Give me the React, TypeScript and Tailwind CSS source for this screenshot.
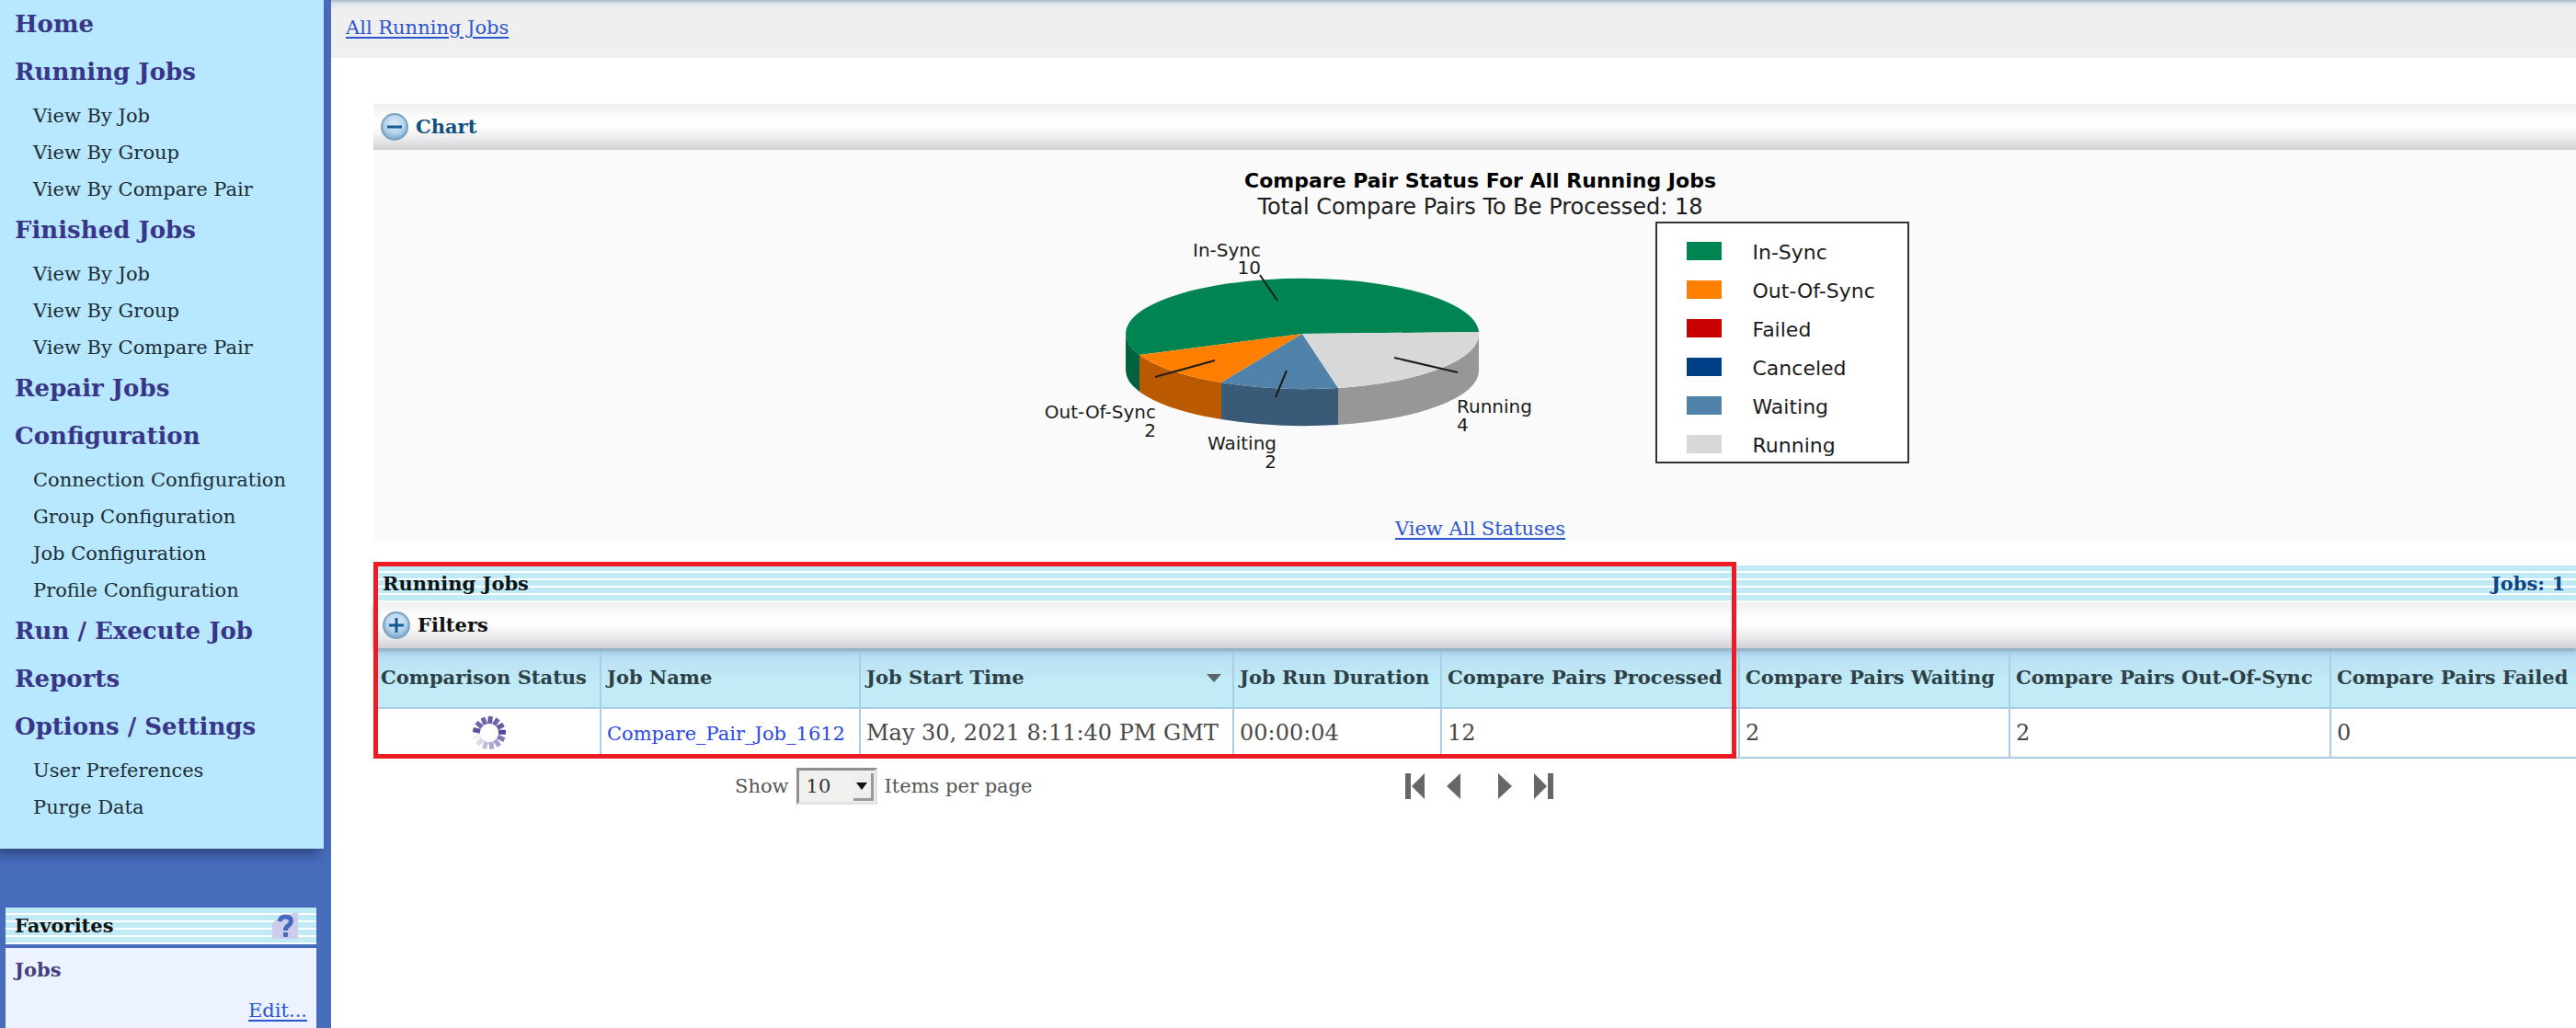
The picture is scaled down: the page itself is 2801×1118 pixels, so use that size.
import { useId, useState } from "react";

const STRIPES =
  "bg-[repeating-linear-gradient(to_bottom,#c0ebf6_0px,#c0ebf6_6px,#fbffff_6px,#fbffff_8px)]";
const SILVER =
  "bg-[linear-gradient(to_bottom,#efefef_0%,#ffffff_35%,#fdfdfd_50%,#e6e7e9_80%,#d0d0d2_100%)]";
const LINK = "text-[#2b55cf] underline underline-offset-3 decoration-2";

const MENU: { title: string; items: string[] }[] = [
  { title: "Home", items: [] },
  { title: "Running Jobs", items: ["View By Job", "View By Group", "View By Compare Pair"] },
  { title: "Finished Jobs", items: ["View By Job", "View By Group", "View By Compare Pair"] },
  { title: "Repair Jobs", items: [] },
  {
    title: "Configuration",
    items: ["Connection Configuration", "Group Configuration", "Job Configuration", "Profile Configuration"],
  },
  { title: "Run / Execute Job", items: [] },
  { title: "Reports", items: [] },
  { title: "Options / Settings", items: ["User Preferences", "Purge Data"] },
];

const LEGEND = [
  { label: "In-Sync", color: "bg-[#008552]" },
  { label: "Out-Of-Sync", color: "bg-[#ff8000]" },
  { label: "Failed", color: "bg-[#c80000]" },
  { label: "Canceled", color: "bg-[#003e85]" },
  { label: "Waiting", color: "bg-[#5182aa]" },
  { label: "Running", color: "bg-[#d8d8d8]" },
];

function Sidebar() {
  return (
    <aside className="flex w-[360px] shrink-0 flex-col bg-[#486cbc]">
      <nav className="mr-2 bg-[#b8e8ff] pb-[27px] shadow-[-6px_6px_12px_#2c4479]">
        <ul>
          {MENU.map((group) => (
            <li key={group.title}>
              <a href="#" className="block pl-4 text-[26px] leading-[52px] font-bold text-[#393689]">
                {group.title}
              </a>
              {group.items.length > 0 && (
                <ul>
                  {group.items.map((item) => (
                    <li key={item}>
                      <a href="#" className="block pt-1 pl-9 leading-9 text-[#1c2d35]">
                        {item}
                      </a>
                    </li>
                  ))}
                </ul>
              )}
            </li>
          ))}
        </ul>
      </nav>
      <section className="mt-16 mr-4 ml-1.5 flex flex-1 flex-col gap-1">
        <header className={`flex h-10 items-center justify-between pr-5 pl-2.5 ${STRIPES}`}>
          <h2 className="font-bold text-[#0d1416]">Favorites</h2>
          <button type="button" aria-label="Help" className="block">
            <svg width="28" height="30" viewBox="0 0 28 30" aria-hidden="true">
              <path d="M0 29V12Q10 3 28 0V29Z" fill="#cccdec" />
              <path
                d="M8 10Q9 5 14 5Q20.500 5 20.500 9.500Q20.500 12 17.500 14.500Q14.500 16.500 14.500 20"
                fill="none"
                stroke="#4368bd"
                strokeWidth="5"
              />
              <rect x="12" y="22" width="5" height="5" rx="1" fill="#4368bd" />
            </svg>
          </button>
        </header>
        <div className="flex flex-1 flex-col bg-[#ecf2ff] px-2.5 pt-2">
          <h3 className="leading-8 font-bold text-[#443f80]">Jobs</h3>
          <a href="#" className={`mt-3 self-end leading-8 ${LINK}`}>
            Edit...
          </a>
        </div>
      </section>
    </aside>
  );
}

function ToggleIcon({ plus }: { plus?: boolean }) {
  const id = useId();
  return (
    <svg width="30" height="30" viewBox="0 0 30 30" className="shrink-0" aria-hidden="true">
      <defs>
        <radialGradient id={id} cx="50%" cy="38%" r="62%">
          <stop offset="0%" stopColor="#dcecfa" />
          <stop offset="60%" stopColor="#b5d4ec" />
          <stop offset="100%" stopColor="#74a6cc" />
        </radialGradient>
      </defs>
      <circle cx="15" cy="15" r="14" fill={`url(#${id})`} stroke="#7aa3c3" strokeWidth="2" />
      <path d={plus ? "M7 15H23M15 7V23" : "M7 15H23"} stroke="#155a90" strokeWidth="3" />
    </svg>
  );
}

function PieChart() {
  return (
    <svg
      width="544"
      height="280"
      viewBox="-284 -122 544 280"
      role="img"
      aria-label="Compare pair status"
      className="shrink-0"
    >
      <path d="M-192 0A192 60 0 0 0 -177 23V63A192 60 0 0 1 -192 40Z" fill="#006340" />
      <path d="M-177 23A192 60 0 0 0 -88 53V93A192 60 0 0 1 -177 63Z" fill="#bb5900" />
      <path d="M-88 53A192 60 0 0 0 39 59V99A192 60 0 0 1 -88 93Z" fill="#395b77" />
      <path d="M39 59A192 60 0 0 0 192 -2V40A192 60 0 0 1 39 99Z" fill="#979797" />
      <path d="M0 0L192 -2A192 60 0 1 0 -177 23Z" fill="#008552" />
      <path d="M0 0L-177 23A192 60 0 0 0 -88 53Z" fill="#ff8000" />
      <path d="M0 0L-88 53A192 60 0 0 0 39 59Z" fill="#5182aa" />
      <path d="M0 0L39 59A192 60 0 0 0 192 -2Z" fill="#d8d8d8" />
      <path d="M-46 -64L-27 -36M-160 47L-95 29M-29 69L-17 40M100 26L169 42" stroke="#1c1c1c" strokeWidth="2" />
      <g fontFamily="DejaVu Sans, sans-serif" fontSize="20" fill="#1c1c1c">
        <g textAnchor="end">
          <text x="-45" y="-84">In-Sync</text>
          <text x="-45" y="-65">10</text>
          <text x="-159" y="92">Out-Of-Sync</text>
          <text x="-159" y="112">2</text>
          <text x="-28" y="126">Waiting</text>
          <text x="-28" y="146">2</text>
        </g>
        <text x="168" y="86">Running</text>
        <text x="168" y="106">4</text>
      </g>
    </svg>
  );
}

function ChartPanel() {
  return (
    <section>
      <header className={`flex h-[50px] items-center ${SILVER}`}>
        <button type="button" className="flex items-center gap-2 pl-2 font-bold text-[#10507f]">
          <ToggleIcon />
          Chart
        </button>
      </header>
      <div className="flex flex-col items-center bg-[#fafafa] pt-5 pl-3 text-black">
        <h2 className="font-['DejaVu_Sans',sans-serif] text-[22px] leading-7 font-bold">
          Compare Pair Status For All Running Jobs
        </h2>
        <p className="font-['DejaVu_Sans',sans-serif] text-2xl leading-7 text-[#1c1c1c]">
          Total Compare Pairs To Be Processed: 18
        </p>
        <div className="mt-0.5 mr-3 flex items-start gap-[124px]">
          <PieChart />
          <ul className="flex w-[276px] flex-col gap-[22px] border-2 border-[#333] bg-white pt-5 pb-[9px] pl-8 font-['DejaVu_Sans',sans-serif] text-[22px] leading-6 text-[#1c1c1c]">
            {LEGEND.map((entry) => (
              <li key={entry.label} className="flex h-5 items-start gap-[34px]">
                <span className={`h-5 w-[38px] ${entry.color}`} />
                {entry.label}
              </li>
            ))}
          </ul>
        </div>
        <a href="#" className={`mt-10 leading-7 ${LINK}`}>
          View All Statuses
        </a>
      </div>
    </section>
  );
}

const SPOKES = [0.85, 0.8, 0.85, 0.95, 0.7, 0.5, 0.45, 0.35, 0.2, 0.08, 0.9, 0.8, 0.8];

function Spinner() {
  return (
    <svg width="38" height="38" viewBox="-19 -19 38 38" className="mx-auto" role="img" aria-label="Running">
      {SPOKES.map((opacity, i) => (
        <rect
          key={i}
          x="-3"
          y="-18"
          width="5"
          height="8"
          fill="#4a3f96"
          opacity={opacity}
          transform={`rotate(${i * (360 / 13) + 6})`}
        />
      ))}
    </svg>
  );
}

const CELL = "border-r-2 border-b-2 border-[#a9cde9] pl-1.5 text-left whitespace-nowrap";

function JobsTable() {
  return (
    <table className="w-full table-fixed border-separate border-spacing-0">
      <colgroup>
        <col className="w-[248px]" />
        <col className="w-[282px]" />
        <col className="w-[406px]" />
        <col className="w-[226px]" />
        <col className="w-[324px]" />
        <col className="w-[294px]" />
        <col className="w-[349px]" />
        <col />
      </colgroup>
      <thead>
        <tr className="h-[66px] bg-[linear-gradient(to_bottom,#a9d3ef_0%,#bce2f3_22%,#c1ecf7_60%)] text-[#2e3f46]">
          <th className={`${CELL} pl-2`}>Comparison Status</th>
          <th className={CELL}>Job Name</th>
          <th className={CELL} aria-sort="descending">
            <button type="button" className="flex w-full items-center justify-between pr-3 font-bold">
              Job Start Time
              <svg width="16" height="9" viewBox="0 0 16 9" aria-hidden="true">
                <path d="M0 0H16L8 9Z" fill="#5d6468" />
              </svg>
            </button>
          </th>
          <th className={CELL}>Job Run Duration</th>
          <th className={CELL}>Compare Pairs Processed</th>
          <th className={CELL}>Compare Pairs Waiting</th>
          <th className={CELL}>Compare Pairs Out-Of-Sync</th>
          <th className="border-b-2 border-[#a9cde9] pl-1.5 text-left whitespace-nowrap">Compare Pairs Failed</th>
        </tr>
      </thead>
      <tbody>
        <tr className="h-[54px] text-2xl text-[#484848]">
          <td className={CELL}>
            <Spinner />
          </td>
          <td className={CELL}>
            <a href="#" className="text-[21px] text-[#2b4be0]">
              Compare_Pair_Job_1612
            </a>
          </td>
          <td className={CELL}>May 30, 2021 8:11:40 PM GMT</td>
          <td className={CELL}>00:00:04</td>
          <td className={CELL}>12</td>
          <td className={CELL}>2</td>
          <td className={CELL}>2</td>
          <td className="border-b-2 border-[#a9cde9] pl-1.5 text-left whitespace-nowrap">0</td>
        </tr>
      </tbody>
    </table>
  );
}

const PAGER = [
  { label: "First page", width: 21, d: "M0 0H6V28H0ZM21 0V28L7 14Z", gap: "" },
  { label: "Previous page", width: 15, d: "M15 0V28L0 14Z", gap: "ml-6" },
  { label: "Next page", width: 15, d: "M0 0V28L15 14Z", gap: "ml-[41px]" },
  { label: "Last page", width: 21, d: "M0 0V28L14 14ZM15 0H21V28H15Z", gap: "ml-6" },
];

function Pagination() {
  const [size, setSize] = useState("10");
  return (
    <footer className="flex items-center pt-2.5 pl-[393px] text-[#555]">
      <label htmlFor="page-size">Show</label>
      <span className="relative mx-2 flex">
        <select
          id="page-size"
          value={size}
          onChange={(event) => setSize(event.target.value)}
          className="h-10 w-[88px] appearance-none border-3 border-t-[#8f8f8f] border-r-[#e4e4e4] border-b-[#e4e4e4] border-l-[#8f8f8f] bg-[#f0f0ef] pl-2 text-[#333]"
        >
          <option>10</option>
          <option>25</option>
          <option>50</option>
        </select>
        <span className="pointer-events-none absolute top-1.5 right-1 flex h-[30px] w-[22px] items-center justify-center border-r-3 border-b-3 border-[#999] bg-[#eeeeed]">
          <svg width="12" height="8" viewBox="0 0 12 8" aria-hidden="true">
            <path d="M0 0H12L6 8Z" fill="#111" />
          </svg>
        </span>
      </span>
      <span>Items per page</span>
      <div className="ml-[406px] flex items-center">
        {PAGER.map((button) => (
          <button key={button.label} type="button" aria-label={button.label} className={button.gap}>
            <svg width={button.width} height="28" viewBox={`0 0 ${button.width} 28`} aria-hidden="true">
              <path d={button.d} fill="#676767" />
            </svg>
          </button>
        ))}
      </div>
    </footer>
  );
}

export default function App() {
  return (
    <div className="flex min-h-screen bg-white font-['DejaVu_Serif',serif] text-[21px] leading-7">
      <Sidebar />
      <main className="min-w-0 flex-1">
        <div className="h-[63px] bg-[linear-gradient(to_bottom,#a9bace_0px,#dfe4ea_4px,#efefef_10px)] pt-4 pl-4">
          <a href="#" className={LINK}>
            All Running Jobs
          </a>
        </div>
        <div className="mt-[50px] pl-[46px]">
          <ChartPanel />
          <section className="relative mt-[26px]">
            <header className={`flex h-10 items-center justify-between pr-3 pl-2.5 font-bold ${STRIPES}`}>
              <h2 className="text-[#0d1416]">Running Jobs</h2>
              <span className="text-[#0d4584]">Jobs: 1</span>
            </header>
            <div className={`relative flex h-[50px] items-center shadow-[0_3px_4px_#8fa9bb] ${SILVER}`}>
              <button type="button" className="flex items-center gap-2 pl-2.5 font-bold text-[#111]">
                <ToggleIcon plus />
                Filters
              </button>
            </div>
            <JobsTable />
            <div className="pointer-events-none absolute -top-1 bottom-0 left-0 w-[1482px] border-5 border-[#ed1c24]" />
          </section>
          <Pagination />
        </div>
      </main>
    </div>
  );
}
